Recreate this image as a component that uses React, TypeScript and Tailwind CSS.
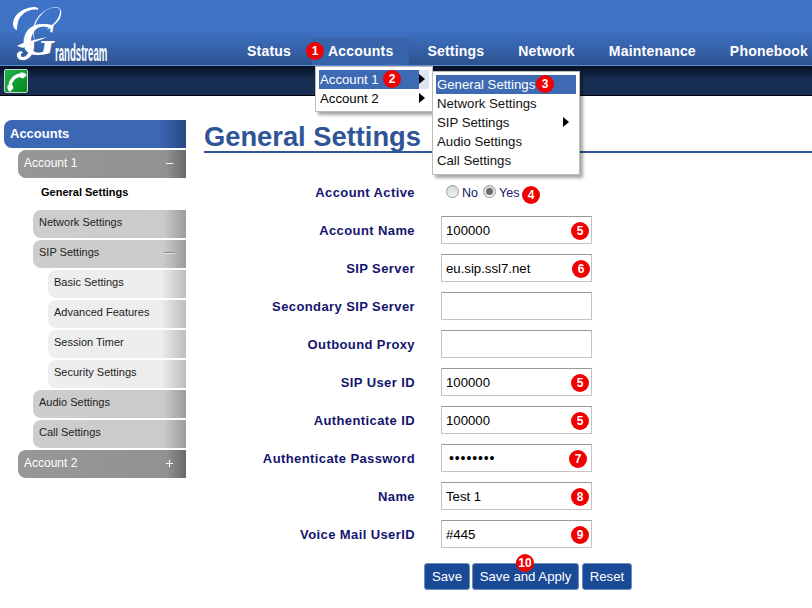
import { Plus, Minus } from "lucide-react"

const sans = "font-['Liberation_Sans',Arial,sans-serif]"
const labelText = `pt-[2px] text-[13px] font-bold tracking-[0.4px] text-[#14146e] ${sans}`

function Badge({ n, className }: { n: number; className: string }) {
  return (
    <span
      className={`absolute flex h-[18px] w-[18px] items-center justify-center rounded-full bg-[#f00000] text-[12px] font-bold leading-none text-white ${sans} ${className}`}
    >
      {n}
    </span>
  )
}

function Arrow({ className }: { className: string }) {
  return (
    <span
      className={`absolute h-0 w-0 border-y-[5px] border-l-[6px] border-y-transparent border-l-black ${className}`}
    />
  )
}

function NavItem({ label, active, className = "" }: { label: string; active?: boolean; className?: string }) {
  return (
    <div
      className={`flex h-[27px] items-center px-4 text-[14px] font-bold tracking-[0.2px] text-white ${sans} ${active ? "bg-[#3763aa]" : ""} ${className}`}
    >
      {label}
    </div>
  )
}

function Logo() {
  return (
    <div className="relative h-[65px] w-[231px] shrink-0 overflow-hidden text-white">
      <svg className="absolute left-0 top-0" width="70" height="65" viewBox="0 0 70 65" fill="none">
        {/* left swirl */}
        <path d="M14 28C10 18 20 8 34 7c3 0 5 1 4 3-8-2-18 4-20 12-1 4-1 6-1 8-1 0-2-1-3-2z" fill="white" />
        {/* top loop */}
        <path d="M60 10c-2-4-10-3-16 2-7 6-11 15-10 24l1 6c-3-8-3-17 3-25 6-7 16-12 21-9 3 2 3 7 0 12-3 4-8 8-13 10 5-4 15-11 14-20z" fill="white" />
        {/* cross stroke and lower tail */}
        <path d="M17 46c8-5 22-7 30-9-8 4-18 6-24 11z" fill="white" />
        <path d="M34 42c1 8-2 16-9 18-5 1-9-2-8-6 1-3 5-4 6-1-2 0-3 2-1 4 4 1 9-6 9-15z" fill="white" />
      </svg>
      <span className="absolute left-[22px] top-[17px] font-['Liberation_Serif',serif] text-[46px] font-bold italic leading-none">
        G
      </span>
      <span
        className={`absolute left-[55px] top-[41px] origin-left scale-x-[0.4] text-[24px] font-bold leading-none ${sans}`}
      >
        randstream
      </span>
    </div>
  )
}

function SideItem({
  label,
  level,
  icon,
}: {
  label: string
  level: number
  icon?: "minus" | "plus" | "sip"
}) {
  const styles = [
    "ml-[14px] pl-[6px] pb-[2px] h-7 text-[12px] text-white bg-[linear-gradient(to_right,#979797_0%,#929292_88%,#6a6a6a_100%)]",
    "ml-[29px] pl-[6px] pb-[4px] h-7 text-[11px] text-[#222] bg-[linear-gradient(to_right,#cdcdcd_0%,#cbcbcb_85%,#9b9b9b_100%)]",
    "ml-[44px] pl-[6px] pb-[4px] h-7 text-[11px] text-[#222] bg-[linear-gradient(to_right,#eeeeee_0%,#ededed_82%,#bdbdbd_100%)]",
  ]
  return (
    <div className={`mt-[2px] flex items-center justify-between rounded-l-lg pr-[11px] ${sans} ${styles[level]}`}>
      <span>{label}</span>
      {icon === "minus" && <Minus size={11} strokeWidth={2.4} className="text-white" />}
      {icon === "plus" && <Plus size={11} strokeWidth={2.2} className="text-white" />}
      {icon === "sip" && <span className="mt-[2px] h-[2px] w-[11px] border-t border-[#8b8b8b] bg-[#e4e4e4]" />}
    </div>
  )
}

function Sidebar() {
  return (
    <aside className="ml-1 w-[182px] shrink-0">
      <div
        className={`flex h-7 items-center rounded-l-lg bg-[linear-gradient(to_right,#3b67b5_0%,#3b67b5_85%,#284a85_100%)] pl-[6px] text-[13px] font-bold text-white ${sans}`}
      >
        Accounts
      </div>
      <SideItem label="Account 1" level={0} icon="minus" />
      <div className={`flex h-[30px] items-center pb-[2px] pl-[37px] text-[11px] font-bold text-black ${sans}`}>
        General Settings
      </div>
      <SideItem label="Network Settings" level={1} />
      <SideItem label="SIP Settings" level={1} icon="sip" />
      <SideItem label="Basic Settings" level={2} />
      <SideItem label="Advanced Features" level={2} />
      <SideItem label="Session Timer" level={2} />
      <SideItem label="Security Settings" level={2} />
      <SideItem label="Audio Settings" level={1} />
      <SideItem label="Call Settings" level={1} />
      <SideItem label="Account 2" level={0} icon="plus" />
    </aside>
  )
}

function Field({
  label,
  value,
  badge,
  badgeClass = "left-[130px]",
  type = "text",
}: {
  label: string
  value: string
  badge?: number
  badgeClass?: string
  type?: string
}) {
  const isPassword = type === "password"
  return (
    <div className="flex h-[38px] items-center">
      <label className={`w-[211px] shrink-0 text-right ${labelText}`}>{label}</label>
      <div className="relative ml-[26px]">
        <input
          readOnly
          type={type}
          value={value}
          className={`block h-7 w-[151px] border border-[#c4c4c4] border-t-[#999] bg-white text-black outline-none ${sans} ${isPassword ? "px-[7px] text-[14px] tracking-[0.9px]" : "px-[4px] text-[13.2px]"}`}
        />
        {badge !== undefined && <Badge n={badge} className={`top-[6px] ${badgeClass}`} />}
      </div>
    </div>
  )
}

function RadioDot({ checked }: { checked?: boolean }) {
  return (
    <span className="mb-[3px] flex h-[13px] w-[13px] items-center justify-center rounded-full border border-[#9a9a9a] bg-[linear-gradient(to_bottom,#d5d5d5,#f4f4f4)]">
      {checked && <span className="h-[7px] w-[7px] rounded-full bg-[#6b6b6b]" />}
    </span>
  )
}

function Btn({ label, className }: { label: string; className: string }) {
  return (
    <button
      className={`h-[27px] rounded-[3px] border border-[#6f8fc0] bg-[#1a4a96] text-[13.2px] text-white ${sans} ${className}`}
    >
      {label}
    </button>
  )
}

export default function App() {
  return (
    <div className="relative h-[608px] w-[812px] overflow-hidden bg-white">
      {/* top bar */}
      <header className="h-[65px] bg-[linear-gradient(to_bottom,#3d72c6_0%,#3e73c6_45%,#2f5290_100%)]">
        <div className="flex h-full items-end">
          <Logo />
          <nav className="flex gap-[2px] whitespace-nowrap">
            <NavItem label="Status" className="mr-[3px]" />
            <NavItem label="Accounts" active />
            <NavItem label="Settings" />
            <NavItem label="Network" />
            <NavItem label="Maintenance" />
            <NavItem label="Phonebook" />
          </nav>
        </div>
      </header>
      <div className="flex h-[31px] items-center border-y border-t-[#5f8fd6] border-b-black bg-[linear-gradient(to_bottom,#050f22_0%,#182d52_45%,#182d52_100%)] pl-1">
        <div className="flex h-6 w-6 items-center justify-center rounded-[2px] border border-[#c9d6c9] bg-[linear-gradient(135deg,#22b14c,#008a1e)]">
          <svg width="22" height="22" viewBox="0 0 22 22" fill="none">
            <path d="M5 17C5 10 10 5 17 5" stroke="white" strokeWidth="3.4" />
            <path d="M2.5 15.5l5-.5 1 3-3 3.5c-2 0-3.5-2-3-6z" fill="white" />
            <path d="M15.5 2.5c4-.5 6 1 6 3l-3.5 3-3-1z" fill="white" />
          </svg>
        </div>
      </div>

      <div className="mt-6 flex">
        <Sidebar />
        <main className="ml-[18px] min-w-0 flex-1">
          <h1
            className={`h-[33px] border-b-2 border-[#2f5597] text-[27.3px] font-bold leading-[33px] text-[#2f5597] ${sans}`}
          >
            General Settings
          </h1>
          <div className="mt-5">
            <div className="flex h-[38px] items-center">
              <label className={`w-[211px] shrink-0 text-right ${labelText}`}>Account Active</label>
              <div className={`relative ml-[31px] mt-[2px] flex items-center text-[12.5px] text-[#14146e] ${sans}`}>
                <RadioDot />
                <span className="ml-[3px]">No</span>
                <span className="ml-[5px]">
                  <RadioDot checked />
                </span>
                <span className="ml-[3px]">Yes</span>
                <Badge n={4} className="left-[76px] top-[2px]" />
              </div>
            </div>
            <Field label="Account Name" value="100000" badge={5} />
            <Field label="SIP Server" value="eu.sip.ssl7.net" badge={6} badgeClass="left-[131px]" />
            <Field label="Secondary SIP Server" value="" />
            <Field label="Outbound Proxy" value="" />
            <Field label="SIP User ID" value="100000" badge={5} />
            <Field label="Authenticate ID" value="100000" badge={5} />
            <Field label="Authenticate Password" value="12345678" type="password" badge={7} badgeClass="left-[128px]" />
            <Field label="Name" value="Test 1" badge={8} />
            <Field label="Voice Mail UserID" value="#445" badge={9} />
          </div>
          <div className="relative ml-[220px] mt-[10px] flex">
            <Btn label="Save" className="w-[46px]" />
            <Btn label="Save and Apply" className="ml-[2px] w-[107px]" />
            <Btn label="Reset" className="ml-[3px] w-[50px]" />
            <Badge n={10} className="left-[92px] top-[-9px]" />
          </div>
        </main>
      </div>

      {/* open menus */}
      <Badge n={1} className="left-[306px] top-[42px]" />
      <div className={`absolute left-[315px] top-[66px] h-[46px] w-[118px] border border-[#bbb] bg-white p-[3px] text-[13.2px] leading-[19px] text-black shadow-[3px_3px_3px_rgba(0,0,0,0.35)] ${sans}`}>
        <div className="relative h-[19px] bg-[#e0e4f0]">
          <div className="h-[19px] w-[100px] bg-[#3e6ab3] pl-[1px] text-white">Account 1</div>
          <Badge n={2} className="left-[64px] top-0" />
          <Arrow className="left-[100px] top-[4px]" />
        </div>
        <div className="relative h-[19px] pl-[1px]">
          Account 2
          <Arrow className="left-[100px] top-[4px]" />
        </div>
      </div>
      <div className={`absolute left-[432px] top-[71px] h-[104px] w-[148px] border border-[#bbb] bg-white p-[3px] text-[13.2px] leading-[19px] text-[#111] shadow-[3px_3px_3px_rgba(0,0,0,0.35)] ${sans}`}>
        <div className="relative h-[19px] bg-[#3e6ab3] pl-[1px] text-white">
          General Settings
          <Badge n={3} className="left-[100px] top-0" />
        </div>
        <div className="h-[19px] pl-[1px]">Network Settings</div>
        <div className="relative h-[19px] pl-[1px]">
          SIP Settings
          <Arrow className="left-[127px] top-[4px]" />
        </div>
        <div className="h-[19px] pl-[1px]">Audio Settings</div>
        <div className="h-[19px] pl-[1px]">Call Settings</div>
      </div>
    </div>
  )
}
